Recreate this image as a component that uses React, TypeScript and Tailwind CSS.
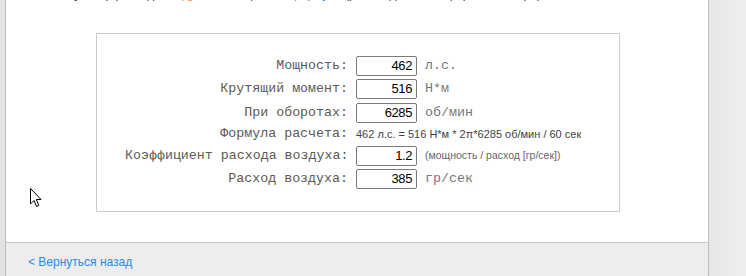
import React from 'react';

const rows = [
  { label: 'Мощность:', value: '462', unit: 'л.с.' },
  { label: 'Крутящий момент:', value: '516', unit: 'Н*м' },
  { label: 'При оборотах:', value: '6285', unit: 'об/мин' },
];

const rows2 = [
  { label: 'Коэффициент расхода воздуха:', value: '1.2', note: '(мощность / расход [гр/сек])' },
  { label: 'Расход воздуха:', value: '385', unit: 'гр/сек' },
];

const mono = "font-['Liberation_Mono','Courier_New',monospace]";
const sans = "font-['Liberation_Sans',Arial,sans-serif]";

const Field = ({ value }: { value: string }) => (
  <div
    className={`h-[20px] w-[61px] border border-[#7a7a7a] rounded-[2px] bg-white pr-[4px] text-right text-[13px] leading-[18px] tracking-[-0.4px] text-black ${sans}`}
  >
    {value}
  </div>
);

const Label = ({ text }: { text: string }) => (
  <div className={`text-right text-[13.3px] text-[#5a5a5a] whitespace-nowrap ${mono}`}>{text}</div>
);

export default function App() {
  return (
    <div className="relative h-[276px] w-[746px] overflow-hidden bg-[#eeeeee]">
      <div className="flex h-full">
        <div className="w-[5px] bg-[#e3e3e3]" />
        <div className="flex w-[704px] flex-col border-x border-[#bdbdbd] bg-white">
          {/* cut-off intro line */}
          <div className={`-mt-[13px] h-[15px] whitespace-nowrap pl-[36px] text-[12px] leading-[15px] text-[#333] ${sans}`}>
            Калькулятор расхода <span className="text-[#e8892b]">воздуха</span> по мощности, <span className="text-[#2a8ae5]">формула</span> (расчет для атмосферного мотора)
          </div>

          <div className="ml-[90px] mt-[31px] w-[524px] border border-[#cccccc] pb-[22px] pl-[28px] pt-[22px]">
            <div className="grid grid-cols-[223px_61px_auto] items-center gap-x-[8px] gap-y-[3.3px]">
              {rows.map((r) => (
                <React.Fragment key={r.label}>
                  <Label text={r.label} />
                  <Field value={r.value} />
                  <div className={`text-[13.3px] text-[#777] ${mono}`}>{r.unit}</div>
                </React.Fragment>
              ))}
              <div className="h-[16px] flex items-center justify-end">
                <Label text="Формула расчета:" />
              </div>
              <div className={`col-span-2 whitespace-nowrap text-[11px] text-[#444] ${sans}`}>
                462 л.с. = 516 Н*м * 2π*6285 об/мин / 60 сек
              </div>
              {rows2.map((r) => (
                <React.Fragment key={r.label}>
                  <Label text={r.label} />
                  <Field value={r.value} />
                  {r.note ? (
                    <div className={`whitespace-nowrap text-[10.5px] text-[#666] ${sans}`}>{r.note}</div>
                  ) : (
                    <div className={`text-[13.3px] text-[#777] ${mono}`}>{r.unit}</div>
                  )}
                </React.Fragment>
              ))}
            </div>
          </div>

          <div className="mt-auto h-[34px] border-t border-[#c8c8c8] bg-[#ededed] pl-[22px] pt-[10px] leading-[14px]">
            <a href="#" className={`text-[12px] leading-[14px] text-[#2a8ae5] ${sans}`}>
              &lt; Вернуться назад
            </a>
          </div>
        </div>
        <div className="flex-1 bg-gradient-to-r from-[#e6e6e6] to-[#efefef]" />
      </div>

      {/* mouse pointer */}
      <svg className="absolute left-[30px] top-[188px]" width="13" height="20" viewBox="0 0 13 20">
        <path
          d="M0.5 0.5 L0.5 16 L4 12.5 L6.5 18.5 L8.8 17.5 L6.3 11.5 L11 11.5 Z"
          fill="white"
          stroke="black"
          strokeWidth="1"
          strokeLinejoin="miter"
        />
      </svg>
    </div>
  );
}
